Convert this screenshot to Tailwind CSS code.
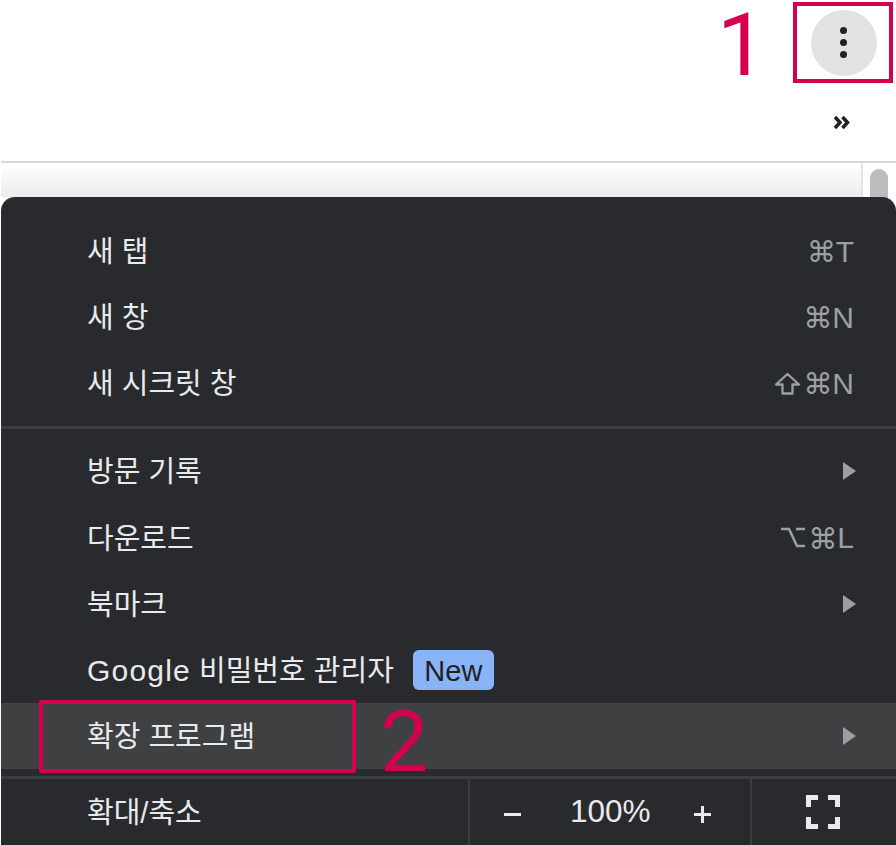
<!DOCTYPE html>
<html lang="ko">
<head>
    <meta charset="UTF-8">
    <title>Chrome 메뉴</title>
    <script src="https://cdn.jsdelivr.net/npm/@tailwindcss/browser@4"></script>
</head>
<body class="relative w-[896px] h-[845px] overflow-hidden bg-white font-['Liberation_Sans','Noto_Sans_CJK_KR',sans-serif]">

    <!-- Toolbar -->
    <div class="h-[161px] relative">
        <div class="absolute left-[793px] top-[2px] w-[100px] h-[81px] border-[4px] border-[#d4004f] flex items-center justify-center">
            <div class="ml-px w-[66px] h-[66px] rounded-full bg-[#e2e2e2] flex flex-col items-center justify-center gap-[5px]">
                <span class="w-[7px] h-[7px] rounded-full bg-[#202124]"></span>
                <span class="w-[7px] h-[7px] rounded-full bg-[#202124]"></span>
                <span class="w-[7px] h-[7px] rounded-full bg-[#202124]"></span>
            </div>
        </div>
        <svg class="absolute left-[833px] top-[115px]" width="17" height="15" viewBox="0 0 17 15" fill="none" stroke="#202124" stroke-width="3.5">
            <path d="M2 2 L7 7.5 L2 13"/>
            <path d="M9.5 2 L14.5 7.5 L9.5 13"/>
        </svg>
    </div>

    <!-- Page behind the menu -->
    <div class="h-[36px] ml-px border-t-2 border-[#d6d6d6] bg-gradient-to-b from-white to-[#ececec] flex justify-end">
        <div class="w-[35px] border-l-2 border-[#e4e4e4] bg-white pl-[7px] pt-[6px]">
            <div class="w-[18px] h-[40px] rounded-full bg-[#bdbdbd]"></div>
        </div>
    </div>

    <!-- Menu -->
    <div class="absolute left-px top-[197px] w-[895px] h-[648px] rounded-t-[14px] bg-[#292a2d] text-[29px] text-[#e8eaed] pt-[21px]">
        <div class="h-[66px] flex items-center justify-between pl-[86px] pr-[42px]">
            <span class="mt-[4px]">새 탭</span>
            <span class="flex items-center text-[#9aa0a6] text-[30px]"><span class="font-['DejaVu_Sans'] text-[29px] mt-[4px]">⌘</span><span>T</span></span>
        </div>
        <div class="h-[66px] flex items-center justify-between pl-[86px] pr-[42px]">
            <span class="mt-[4px]">새 창</span>
            <span class="flex items-center text-[#9aa0a6] text-[30px]"><span class="font-['DejaVu_Sans'] text-[29px] mt-[4px]">⌘</span><span>N</span></span>
        </div>
        <div class="h-[66px] flex items-center justify-between pl-[86px] pr-[42px]">
            <span class="mt-[4px]">새 시크릿 창</span>
            <span class="flex items-center text-[#9aa0a6] text-[30px]">
                <svg class="mr-[2px]" width="27" height="23" viewBox="0 0 27 23" fill="none" stroke="currentColor" stroke-width="2.3" stroke-linejoin="round"><path d="M13.5 2 L25 12.5 H18.5 V21.5 H8.5 V12.5 H2 Z"/></svg>
                <span class="font-['DejaVu_Sans'] text-[29px] mt-[4px]">⌘</span><span>N</span>
            </span>
        </div>
        <div class="h-[3px] mt-[10px] mb-[9px] bg-[#3c3d40]"></div>
        <div class="h-[66px] flex items-center justify-between pl-[86px] pr-[40px]">
            <span class="mt-[4px]">방문 기록</span>
            <span class="w-0 h-0 border-y-[9.5px] border-y-transparent border-l-[13px] border-l-[#9e9e9e]"></span>
        </div>
        <div class="h-[67px] flex items-center justify-between pl-[86px] pr-[42px]">
            <span class="mt-[4px]">다운로드</span>
            <span class="flex items-center text-[#9aa0a6] text-[30px]">
                <svg class="mr-[2px]" width="26" height="23" viewBox="0 0 26 23" fill="none" stroke="currentColor" stroke-width="2.5"><path d="M1 3 H9 L17 20 H25 M16 3 H25"/></svg>
                <span class="font-['DejaVu_Sans'] text-[29px] mt-[4px]">⌘</span><span>L</span>
            </span>
        </div>
        <div class="h-[66px] flex items-center justify-between pl-[86px] pr-[40px]">
            <span class="mt-[4px]">북마크</span>
            <span class="w-0 h-0 border-y-[9.5px] border-y-transparent border-l-[13px] border-l-[#9e9e9e]"></span>
        </div>
        <div class="h-[66px] flex items-center pl-[86px]">
            <span class="mt-[2px]"><span class="text-[30px] tracking-[1.2px]">Google</span> 비밀번호 관리자</span>
            <span class="ml-[19px] w-[81px] h-[40px] pt-[3px] rounded-[6px] bg-[#8ab4f8] text-[#202124] text-[29px] flex items-center justify-center">New</span>
        </div>
        <div class="h-[66px] flex items-center justify-between pl-[86px] pr-[40px] bg-[#3f4042]">
            <span class="mt-[4px]">확장 프로그램</span>
            <span class="w-0 h-0 border-y-[9.5px] border-y-transparent border-l-[13px] border-l-[#9e9e9e]"></span>
        </div>
        <div class="h-[3px] mt-[7px] bg-[#3c3d40]"></div>
        <div class="h-[66px] flex items-center">
            <span class="w-[467px] pl-[86px] mt-[4px]">확대/축소</span>
            <div class="w-[284px] h-full border-x-2 border-[#3c3d40] flex items-center pl-[34px]">
                <span class="w-[17px] h-[3px] mt-[5px] bg-[#e8eaed]"></span>
                <span class="ml-[49px] text-[31.5px]">100%</span>
                <span class="relative ml-[43px] w-[17px] h-[17px] mt-[5px]">
                    <span class="absolute left-0 top-[7px] w-[17px] h-[3px] bg-[#e8eaed]"></span>
                    <span class="absolute left-[7px] top-0 w-[3px] h-[17px] bg-[#e8eaed]"></span>
                </span>
            </div>
            <div class="flex-1 flex justify-center pr-[3px]">
                <svg width="34" height="34" viewBox="0 0 34 34" fill="none" stroke="#e8eaed" stroke-width="5"><path d="M2.5 12 V2.5 H12 M22 2.5 H31.5 V12 M2.5 22 V31.5 H12 M22 31.5 H31.5 V22"/></svg>
            </div>
        </div>
    </div>

    <!-- Annotations -->
    <div class="absolute left-[39px] top-[700px] w-[317px] h-[73px] border-[4px] border-[#d4004f] rounded-[2px]"></div>
    <span class="absolute left-[717px] top-[1px] text-[88px] leading-[88px] text-[#d4004f] font-['Roboto']">1</span>
    <span class="absolute left-[380px] top-[698px] text-[86px] leading-[88px] text-[#d4004f] font-['Roboto']">2</span>
</body>
</html>
